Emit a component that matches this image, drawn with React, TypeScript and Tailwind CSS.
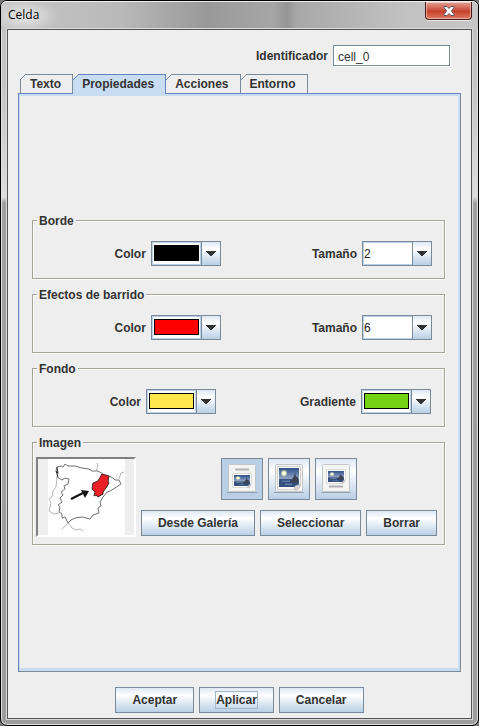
import { useState } from "react";
import type { ReactNode } from "react";

const metal =
  "border border-[#7a8a99] bg-linear-to-b from-[#dde8f3] via-white via-30% to-[#b8cfe5] text-[#333333]";

function PushButton({ children, focused = false }: { children: ReactNode; focused?: boolean }) {
  return (
    <button type="button" className={`flex h-[26px] items-center px-[15px] ${metal}`}>
      <span className={focused ? "border border-[#a3b8cc] leading-4" : "border border-transparent leading-4"}>
        {children}
      </span>
    </button>
  );
}

function Arrow() {
  return (
    <span className="pointer-events-none z-10 col-start-1 row-start-1 flex w-5 items-center justify-center justify-self-end border border-[#7a8a99] bg-linear-to-b from-[#dde8f3] via-white via-30% to-[#b8cfe5]">
      <svg width="10" height="5" viewBox="0 0 10 5" shapeRendering="crispEdges" fill="#333333" aria-hidden="true">
        <path d="M0 0h10v1H9v1H8v1H7v1H6v1H4V4H3V3H2V2H1V1H0z" />
      </svg>
    </span>
  );
}

function ColorCombo({ id, label, color, swatch }: { id: string; label: string; color: string; swatch: string }) {
  return (
    <div className="flex items-center gap-[5px]">
      <label htmlFor={id}>{label}</label>
      <div className="grid h-[25px] w-[70px]">
        <select
          id={id}
          defaultValue={color}
          className="col-start-1 row-start-1 w-full appearance-none border border-[#7a8a99] bg-[#eeeeee] outline-none"
        >
          <option value={color} />
        </select>
        <span className="pointer-events-none z-10 col-start-1 row-start-1 m-px mr-5 border border-[#b8cfe5] bg-white px-px pt-[2px] pb-[3px]">
          <span className={`block h-4 border border-black ${swatch}`} />
        </span>
        <Arrow />
      </div>
    </div>
  );
}

function SizeCombo({ id, value }: { id: string; value: string }) {
  return (
    <div className="flex items-center gap-[5px]">
      <label htmlFor={id}>Tamaño</label>
      <div className="grid h-[25px] w-[70px]">
        <select
          id={id}
          defaultValue={value}
          className="col-start-1 row-start-1 w-full appearance-none border border-[#7a8a99] bg-white pl-px font-normal text-[#222222] shadow-[inset_0_0_0_1px_#b8cfe5] outline-none"
        >
          <option>{value}</option>
        </select>
        <Arrow />
      </div>
    </div>
  );
}

function Group({ title, children }: { title: string; children: ReactNode }) {
  return (
    <fieldset className="border border-[#a3a396] pb-3 shadow-[1px_1px_0_#fff,inset_1px_1px_0_#fff]">
      <legend className="ml-1 bg-[#eeeeee] px-[2px] pt-[2px] leading-[14px]">{title}</legend>
      {children}
    </fieldset>
  );
}

function Photo({ x, y, w, h }: { x: number; y: number; w: number; h: number }) {
  return (
    <svg x={x} y={y} width={w} height={h} viewBox="0 0 20 18" preserveAspectRatio="none">
      <rect width="20" height="18" fill="url(#sky)" />
      <path d="M0 10h20v8H0z" fill="#34507f" />
      <path d="M0 9h20v1.500H0z" fill="#8e9fb5" />
      <path d="M3 12h8v1H3zM6 15h7v1H6z" fill="#6d86ac" />
      <circle cx="5" cy="5" r="3" fill="#dfe7a4" opacity=".6" />
      <circle cx="5" cy="5" r="2" fill="#ffffe0" />
      <path d="M16 4l1 4 2 1v5h-8l1-2 2-1-1-1 2-2z" fill="#3c4350" />
    </svg>
  );
}

type Placement = "abajo" | "centro" | "arriba";

function PlacementIcon({ kind }: { kind: Placement }) {
  return (
    <svg width="32" height="32" viewBox="0 0 32 32" aria-hidden="true">
      <defs>
        <linearGradient id="sky" x1="0" y1="0" x2="0" y2="1">
          <stop offset="0" stopColor="#304f86" />
          <stop offset=".55" stopColor="#8ba4c9" />
        </linearGradient>
      </defs>
      <path d="M1 29.500h30" stroke="#7e8b98" opacity=".7" />
      <rect x="2.500" y="1.500" width="27" height="27" rx="1" fill="#f4f4f3" stroke="#c3c6c8" />
      {kind === "abajo" && (
        <>
          <path d="M9 6.500h14" stroke="#b1b1b1" strokeWidth="2" />
          <path d="M6.500 10.500h19v11l-4 3h-15z" fill="#fff" stroke="#dadada" />
          <Photo x={8} y={12} w={16} h={11} />
          <path d="M20 25l5-5v3l-2 2z" fill="#c9c9c9" />
        </>
      )}
      {kind === "centro" && (
        <>
          <path d="M4.500 3.500h23v19l-4 4h-19z" fill="#fafafa" stroke="#d1d1d1" />
          <Photo x={6} y={5} w={20} h={19} />
          <path d="M21 27l1-4 5-2v3l-3 3z" fill="#d5d5d3" stroke="#a7a7a7" strokeWidth=".5" />
        </>
      )}
      {kind === "arriba" && (
        <>
          <path d="M6.500 6.500h19v11l-4 3h-15z" fill="#fff" stroke="#dadada" />
          <Photo x={8} y={8} w={16} h={11} />
          <path d="M20 21l5-5v3l-2 2z" fill="#c9c9c9" />
          <path d="M9 23.500h14" stroke="#b1b1b1" strokeWidth="2" />
        </>
      )}
    </svg>
  );
}

function SpainMap() {
  return (
    <svg width="77" height="76" viewBox="0 0 77 76" fill="none" aria-label="Mapa" role="img">
      <rect width="77" height="76" fill="#fff" />
      <g stroke="#707070" strokeLinejoin="round">
        <path d="M9 18L10 14 8 12 9 8 13 7 15 8 17 5 20 7 27 7 34 9 41 10 44 12 50 12 55 15M61 17L65 19 67 21 71 21 73 25 67 29 62 32 59 33 55 38 52 43 53 47 50 49 51 54 45 56 42 60 34 58 27 59 23 61 20 64 17 58 14 59 14 55 11 53 12 48 10 46 14 43 12 39 15 36 13 33 17 30 16 27 20 25 21 20 17 19 14 21 9 18" />
      </g>
      <path d="M9 8L10 14 8 12 10 18" stroke="#333" />
      <g stroke="#b4b4b4" strokeLinejoin="round">
        <path d="M9 18L8 28 5 32 4 38 1 40 3 44 1 52 6 55 11 54M20 64L17 67 14 70M20 64L24 69 28 71 32 70 35 72M49 4L50 7 48 12M76 13L73 14 71 20" />
      </g>
      <path d="M54 15L61 17 60 22 61 24 58 29 55 33 55 35 50 38 48 36 46 37 47 33 44 30 45 24 50 22z" fill="#ec1f26" stroke="#422" />
      <path d="M23 40L35 34" stroke="#111" strokeWidth="2" />
      <path d="M33 31L41 32 37 39z" fill="#111" />
    </svg>
  );
}

const tabs = ["Texto", "Propiedades", "Acciones", "Entorno"];

export default function App() {
  const [active, setActive] = useState("Propiedades");
  const [placement, setPlacement] = useState<Placement>("abajo");
  return (
    <div className="bg-[#777777]">
      <div className="flex min-h-screen flex-col rounded-[7px] border border-black bg-[linear-gradient(to_bottom,#c0c0c0,#c4c4c4_80px,#dedcdc_196px,#a0a0a0_202px,#9c9c9c)] font-['Liberation_Sans',Arial,sans-serif] text-[12px] font-bold text-[#333333] shadow-[inset_0_0_0_1px_#e0e0e0]">
        <header className="flex h-7 items-start justify-between rounded-t-[6px] border-t border-white/80 bg-[radial-gradient(ellipse_34px_16px_at_24px_14px,#e6e6e6,transparent),linear-gradient(to_right,#c6c6c6,#b9b9b9_25%,#999_43%,#a6a6a6_57%,#959595_60%,#a8a8a8_62%,#c2c2c2_85%,#c6c6c6)] pr-[6px] pl-[7px]">
          <h1 className="pt-1 font-['Open_Sans',sans-serif] text-[12px] leading-[18px] font-normal text-black">Celda</h1>
          <button
            type="button"
            aria-label="Cerrar"
            className="flex h-[18px] w-[47px] items-center justify-center rounded-b-[4px] border border-t-0 border-[#4b1712] bg-linear-to-b from-[#e0a298] via-[#c8402a] via-55% to-[#dc7860] shadow-[inset_0_0_0_1px_#ffffff70,0_1px_0_#e8e8e8]"
          >
            <svg width="12" height="10" viewBox="0 0 12 10" aria-hidden="true">
              <path d="M1 .5h3l2 2 2-2h3v1L8.500 5 11 8.500v1H8l-2-2-2 2H1v-1L3.500 5 1 1.500z" fill="#fff" stroke="#5b5566" />
            </svg>
          </button>
        </header>

        <main className="mx-[6px] mb-[6px] flex grow flex-col border border-[#555555] bg-[#eeeeee] px-[10px] pt-[15px] pb-[5px] shadow-[0_0_0_1px_#d8d8d8]">
          <div className="flex items-center justify-end gap-[5px] pr-[11px]">
            <label htmlFor="ident">Identificador</label>
            <input
              id="ident"
              defaultValue="cell_0"
              className="h-[21px] w-[117px] border border-[#7a8a99] bg-white px-1 pt-[2px] font-normal shadow-[1px_1px_0_#fff] outline-none"
            />
          </div>

          <div role="tablist" className="mt-2 flex h-[19px] items-start pl-[2px]">
            {tabs.map((tab, i) => {
              const on = tab === active;
              return (
                <button
                  key={tab}
                  type="button"
                  role="tab"
                  aria-selected={on}
                  onClick={() => setActive(tab)}
                  className={`relative flex items-start border-t border-r pt-px pr-[11px] pl-[9px] leading-4 first:border-l ${
                    on ? "z-10 h-5 border-[#6382bf] bg-[#c8ddf2]" : "h-[19px] border-[#7a8a99]"
                  }`}
                >
                  <svg
                    className={`absolute -top-px ${i === 0 ? "-left-px" : "left-0"}`}
                    width="6"
                    height="6"
                    viewBox="0 0 6 6"
                    aria-hidden="true"
                  >
                    <path d="M0 0h6L0 6z" fill="#eeeeee" />
                    <path d="M0 6L6 0" stroke={on ? "#6382bf" : "#7a8a99"} />
                  </svg>
                  {tab}
                </button>
              );
            })}
          </div>

          <section
            role="tabpanel"
            className="flex grow flex-col gap-[7px] border border-[#6382bf] border-r-[#7a8a99] border-b-[#7a8a99] pt-[118px] pr-[15px] pl-[13px] shadow-[inset_1px_2px_0_#c8ddf2,inset_-2px_-3px_0_#c8ddf2]"
          >
            <Group title="Borde">
              <div className="flex justify-end gap-[91px] pt-[13px] pr-3">
                <ColorCombo id="borde" label="Color" color="#000000" swatch="bg-black" />
                <SizeCombo id="borde-tam" value="2" />
              </div>
            </Group>
            <Group title="Efectos de barrido">
              <div className="flex justify-end gap-[91px] pt-[13px] pr-3">
                <ColorCombo id="barrido" label="Color" color="#ff0000" swatch="bg-[#ff0000]" />
                <SizeCombo id="barrido-tam" value="6" />
              </div>
            </Group>
            <Group title="Fondo">
              <div className="flex justify-end gap-[84px] pt-[13px] pr-[13px]">
                <ColorCombo id="fondo" label="Color" color="#fde74c" swatch="bg-[#fde74c]" />
                <ColorCombo id="gradiente" label="Gradiente" color="#73d216" swatch="bg-[#73d216]" />
              </div>
            </Group>
            <Group title="Imagen">
              <div className="-mb-[5px] flex justify-between pt-[7px] pr-[7px] pl-[3px]">
                <div className="flex h-20 w-[100px] justify-center border-2 border-t-[#808080] border-r-white border-b-white border-l-[#808080]">
                  <SpainMap />
                </div>
                <div className="flex flex-col items-center justify-between pt-px pb-px">
                  <div className="flex gap-[5px]">
                    {(["abajo", "centro", "arriba"] as Placement[]).map((kind) => (
                      <button
                        key={kind}
                        type="button"
                        aria-label={`Imagen ${kind}`}
                        aria-pressed={kind === placement}
                        onClick={() => setPlacement(kind)}
                        className={`flex size-[42px] items-center justify-center ${
                          kind === placement ? "border border-[#7a8a99] bg-[#b8cfe5]" : metal
                        }`}
                      >
                        <PlacementIcon kind={kind} />
                      </button>
                    ))}
                  </div>
                  <div className="flex gap-[5px]">
                    <PushButton>Desde Galería</PushButton>
                    <PushButton>Seleccionar</PushButton>
                    <PushButton>Borrar</PushButton>
                  </div>
                </div>
              </div>
            </Group>
          </section>

          <footer className="mt-[15px] flex justify-center gap-[5px]">
            <PushButton>Aceptar</PushButton>
            <PushButton focused>Aplicar</PushButton>
            <PushButton>Cancelar</PushButton>
          </footer>
        </main>
      </div>
    </div>
  );
}
